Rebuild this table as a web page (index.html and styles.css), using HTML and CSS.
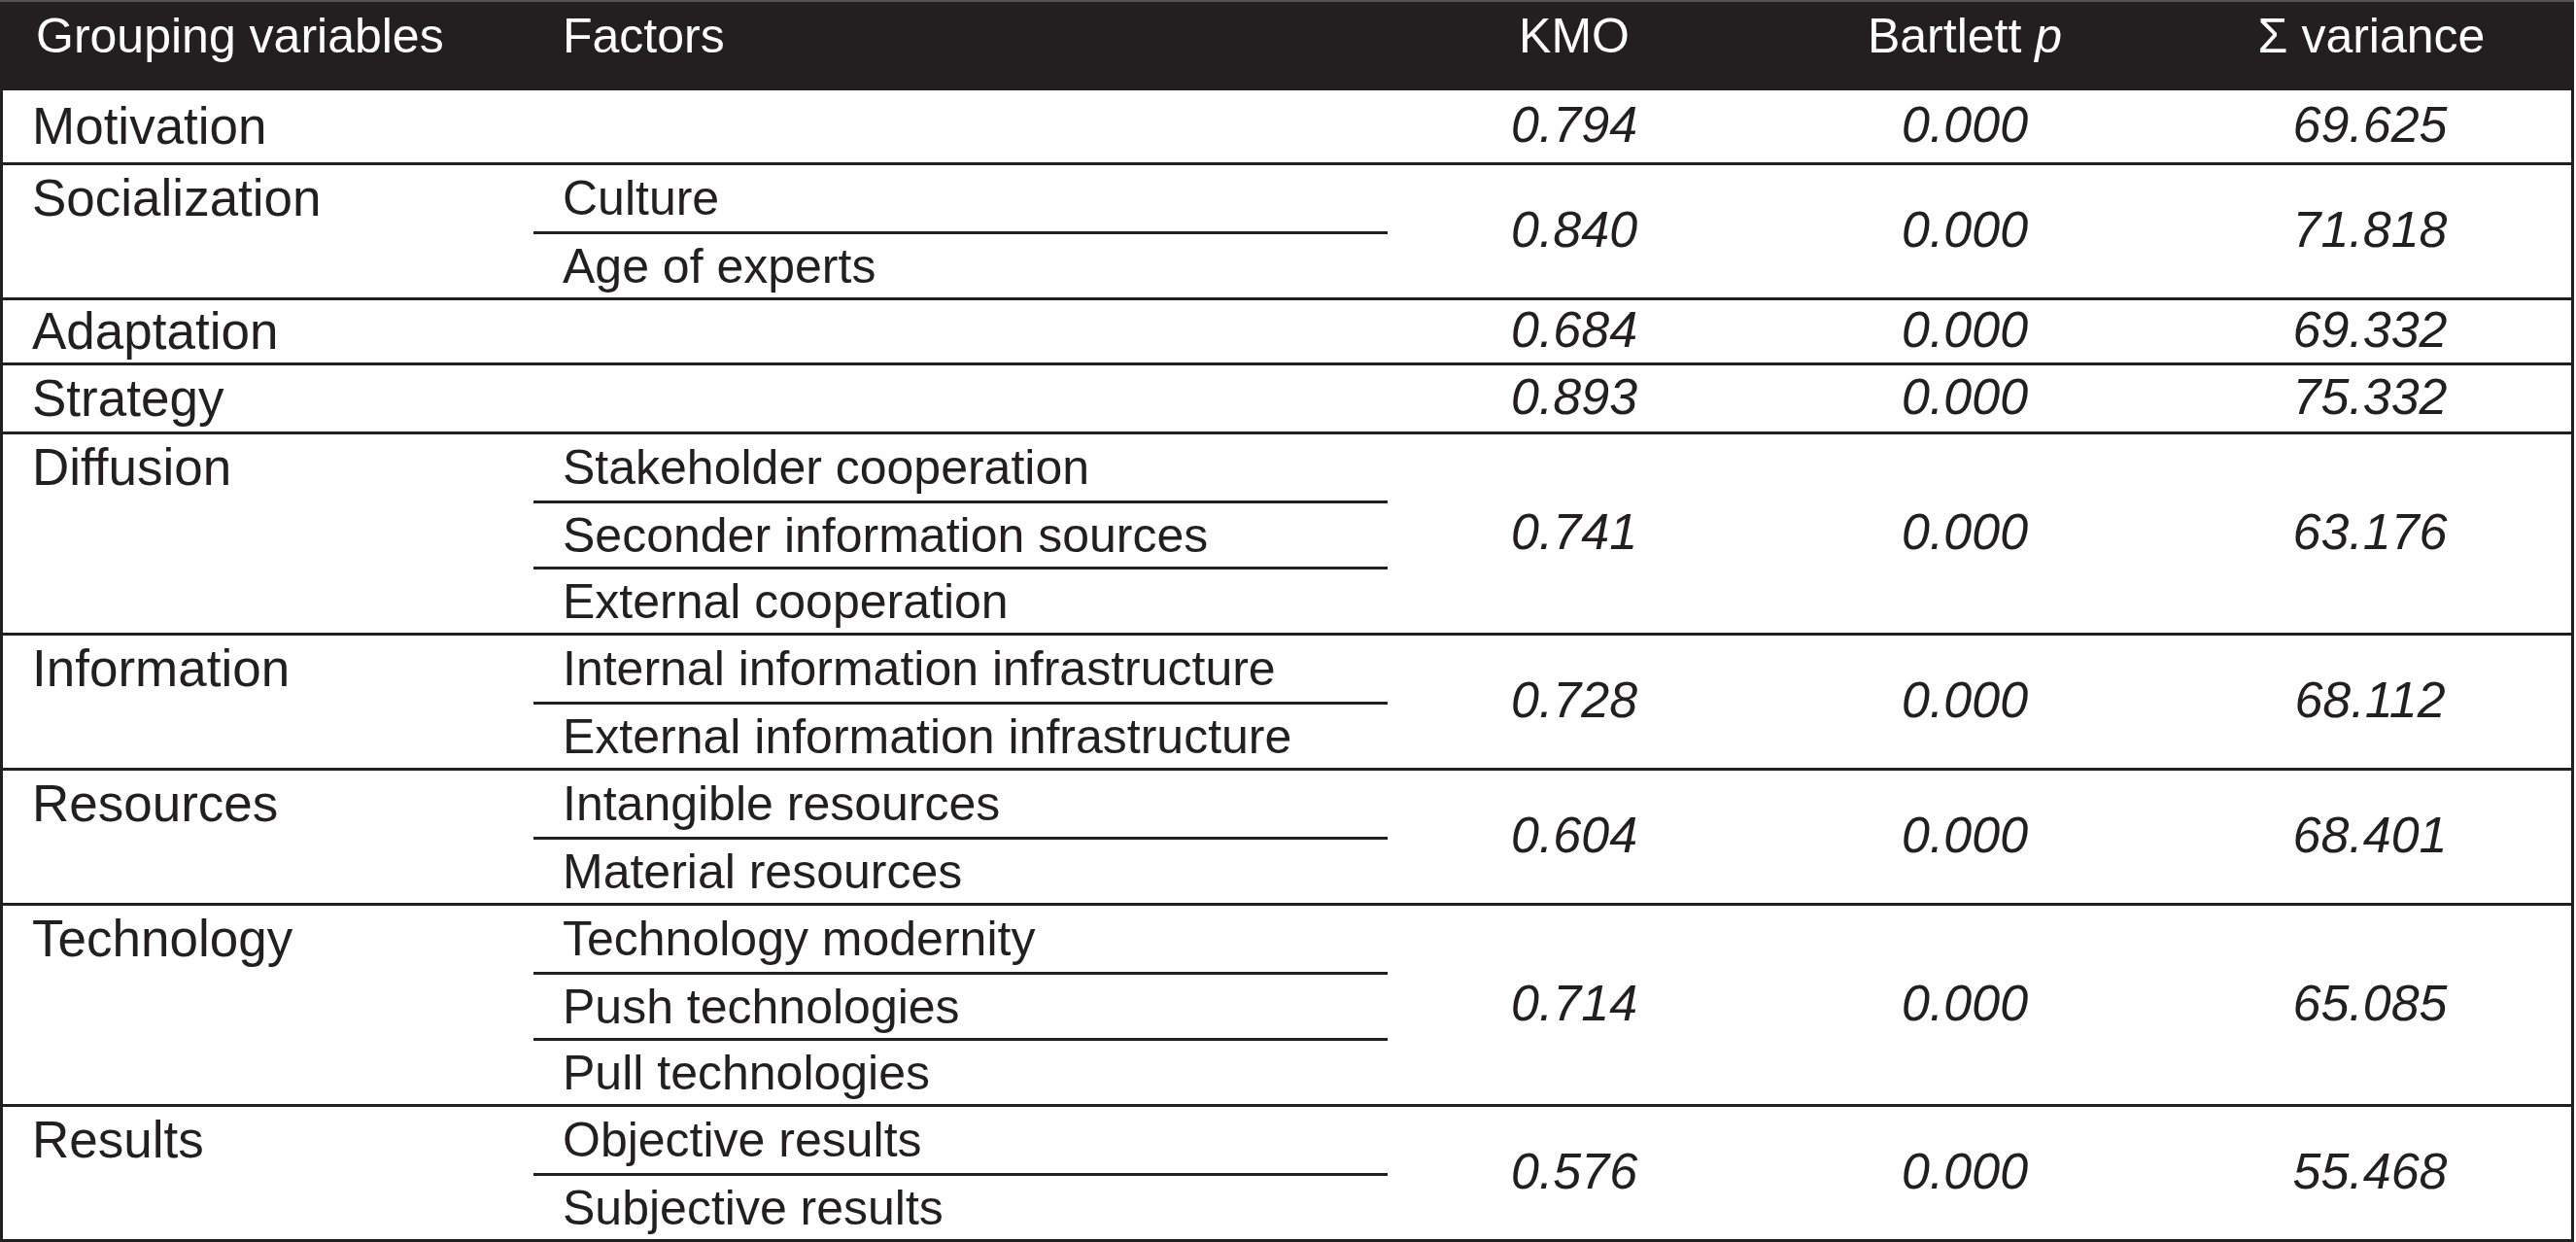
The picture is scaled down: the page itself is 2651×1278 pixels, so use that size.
FILE: index.html
```html
<!DOCTYPE html>
<html lang="en">
<head>
<meta charset="utf-8">
<title>Factor analysis summary</title>
<link rel="stylesheet" href="styles.css">
</head>
<body>
<div class="table">
  <div class="head">
    <div class="hc hc-var">Grouping variables</div>
    <div class="hc hc-fac">Factors</div>
    <div class="hc hc-num">KMO</div>
    <div class="hc hc-num">Bartlett <i>p</i></div>
    <div class="hc hc-num">Σ variance</div>
  </div>
  <div class="body">
    <div class="group group-tall">
      <div class="var">Motivation</div>
      <div class="factors"><div class="factor"></div></div>
      <div class="num">0.794</div>
      <div class="num">0.000</div>
      <div class="num">69.625</div>
    </div>
    <div class="group">
      <div class="var">Socialization</div>
      <div class="factors">
        <div class="factor">Culture</div>
        <div class="factor">Age of experts</div>
      </div>
      <div class="num">0.840</div>
      <div class="num">0.000</div>
      <div class="num">71.818</div>
    </div>
    <div class="group group-short">
      <div class="var">Adaptation</div>
      <div class="factors"><div class="factor"></div></div>
      <div class="num">0.684</div>
      <div class="num">0.000</div>
      <div class="num">69.332</div>
    </div>
    <div class="group">
      <div class="var">Strategy</div>
      <div class="factors"><div class="factor"></div></div>
      <div class="num">0.893</div>
      <div class="num">0.000</div>
      <div class="num">75.332</div>
    </div>
    <div class="group">
      <div class="var">Diffusion</div>
      <div class="factors">
        <div class="factor">Stakeholder cooperation</div>
        <div class="factor">Seconder information sources</div>
        <div class="factor">External cooperation</div>
      </div>
      <div class="num">0.741</div>
      <div class="num">0.000</div>
      <div class="num">63.176</div>
    </div>
    <div class="group">
      <div class="var">Information</div>
      <div class="factors">
        <div class="factor">Internal information infrastructure</div>
        <div class="factor">External information infrastructure</div>
      </div>
      <div class="num">0.728</div>
      <div class="num">0.000</div>
      <div class="num">68.112</div>
    </div>
    <div class="group">
      <div class="var">Resources</div>
      <div class="factors">
        <div class="factor">Intangible resources</div>
        <div class="factor">Material resources</div>
      </div>
      <div class="num">0.604</div>
      <div class="num">0.000</div>
      <div class="num">68.401</div>
    </div>
    <div class="group">
      <div class="var">Technology</div>
      <div class="factors">
        <div class="factor">Technology modernity</div>
        <div class="factor">Push technologies</div>
        <div class="factor">Pull technologies</div>
      </div>
      <div class="num">0.714</div>
      <div class="num">0.000</div>
      <div class="num">65.085</div>
    </div>
    <div class="group">
      <div class="var">Results</div>
      <div class="factors">
        <div class="factor">Objective results</div>
        <div class="factor">Subjective results</div>
      </div>
      <div class="num">0.576</div>
      <div class="num">0.000</div>
      <div class="num">55.468</div>
    </div>
  </div>
</div>
</body>
</html>
```

FILE: styles.css
```css
html, body {
  margin: 0;
  padding: 0;
  background: #ffffff;
}

body {
  font-family: "Liberation Sans", Arial, Helvetica, sans-serif;
  color: #231f20;
  width: 2651px;
}

.table {
  width: 2649px;
}

.head {
  display: grid;
  grid-template-columns: 549px 879px 384px 420px 1fr;
  height: 93px;
  box-sizing: border-box;
  background: #231f20;
  border-top: 2px solid #555355;
  color: #ffffff;
}

.hc {
  font-size: 50px;
  line-height: 50px;
  padding-top: 10px;
  white-space: nowrap;
}

.hc-var {
  padding-left: 37px;
}

.hc-fac {
  padding-left: 30px;
}

.hc-num {
  text-align: center;
}

.body {
  border-left: 3px solid #231f20;
  border-right: 3px solid #231f20;
}

.group {
  display: grid;
  grid-template-columns: 546px 879px 384px 420px 1fr;
  border-bottom: 3px solid #231f20;
}

.var {
  font-size: 53px;
  line-height: 68px;
  padding-left: 30px;
  white-space: nowrap;
}

.factors {
  display: flex;
  flex-direction: column;
}

.factor {
  height: 68px;
  box-sizing: border-box;
  display: flex;
  align-items: center;
  padding-left: 30px;
  font-size: 50px;
  white-space: nowrap;
}

.factor + .factor {
  border-top: 3px solid #231f20;
}

.group-tall .factor {
  height: 71px;
}

.group-tall .var {
  line-height: 74px;
}

.group-short .factor {
  height: 64px;
}

.group-short .var {
  line-height: 64px;
}

.num {
  display: flex;
  align-items: center;
  justify-content: center;
  padding-bottom: 4px;
  font-size: 52px;
  font-style: italic;
}
```
